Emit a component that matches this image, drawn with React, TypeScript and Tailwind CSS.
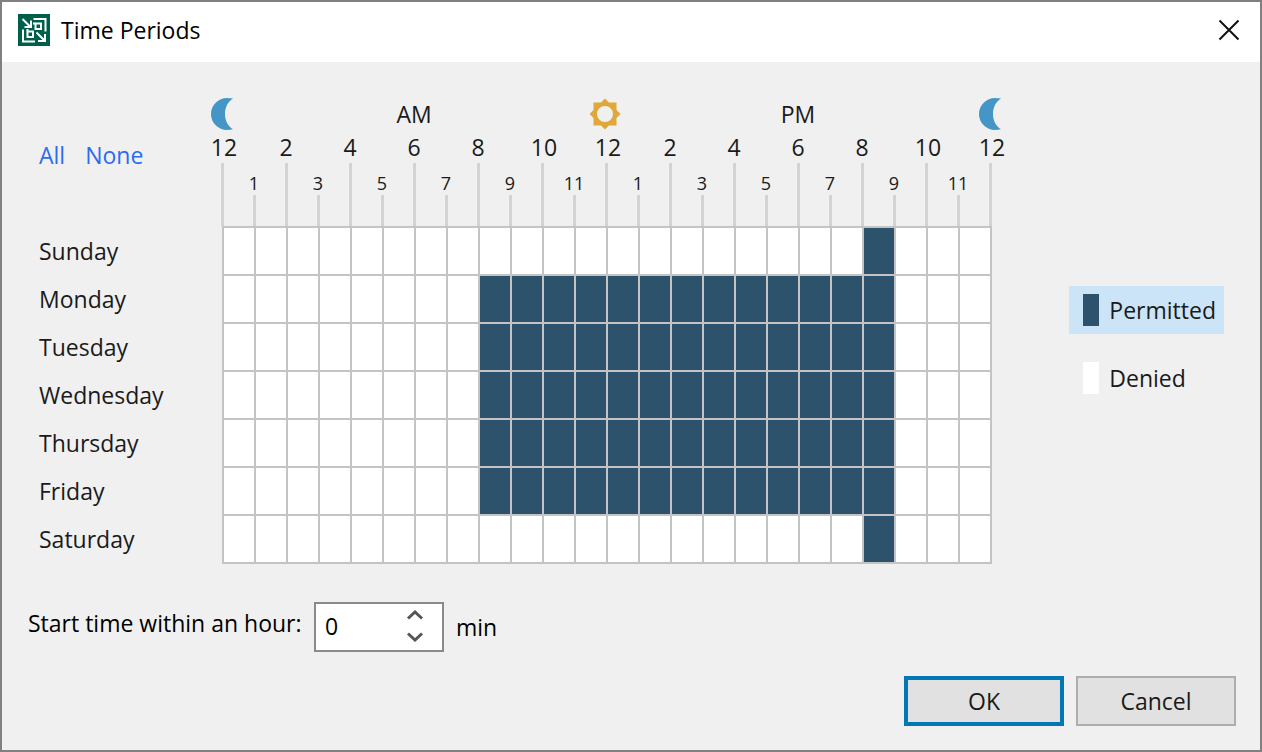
import { useState } from "react";
import type { MouseEvent } from "react";

const DAYS = ["Sunday", "Monday", "Tuesday", "Wednesday", "Thursday", "Friday", "Saturday"];
const HOURS = Array.from({ length: 24 }, (_, i) => i);
const TICKS = Array.from({ length: 25 }, (_, i) => i);

// 8 AM - 9 PM on weekdays, 8 PM - 9 PM at the weekend
const initialSchedule = DAYS.map((_, day) =>
  HOURS.map((hour) => (day > 0 && day < 6 ? hour >= 8 && hour < 21 : hour === 20)),
);

function AppLogo() {
  return (
    <svg viewBox="0 0 32 32" className="size-8" aria-hidden="true">
      <rect width="32" height="32" fill="#005f4b" />
      <g fill="none" stroke="#fff" strokeWidth="2">
        <path d="M4.500 5l8 8M13 6.500v6.500H6.500" />
        <path d="M15.500 5H27.500v12.500M17.500 9.500h5.500v5.500h-5.500z" />
        <path d="M5 15.500V27.500h12M9.500 17.500h5.500v5.500h-5.500z" />
        <path d="M15 9.500h2.500M9.500 15v2.500" />
        <path d="M18.500 18.500l8 8M27 20v7h-7" />
      </g>
    </svg>
  );
}

function Moon() {
  return (
    <svg viewBox="0 0 24 32" className="h-8 w-6 shrink-0" aria-hidden="true">
      <path d="M23 0.500Q20 0 17 0A16 16 0 0 0 17 32Q20 32 23 31.300C17.500 28 15 22 15 16S17.500 4 23 0.500z" fill="#4596c8" />
    </svg>
  );
}

function Sun() {
  return (
    <svg viewBox="0 0 32 32" className="size-8 shrink-0" aria-hidden="true">
      <path
        fillRule="evenodd"
        fill="#e0a838"
        d="M15 0.500l4 4h7.500V12l4 4-4 4v7.500H19l-4 4-4-4H3.500V20l-4-4 4-4V4.500H11zM15 8a8 8 0 1 0 0 16a8 8 0 1 0 0-16z"
      />
    </svg>
  );
}

function Marker({ tick }: { tick: number }) {
  if (tick === 12) return <Sun />;
  if (tick % 12 === 0) return <Moon />;
  if (tick === 6) return <span>AM</span>;
  if (tick === 18) return <span>PM</span>;
  return null;
}

function HourScale() {
  return (
    <div className="flex">
      {TICKS.map((tick) => (
        <div key={tick} className="flex w-8 flex-col items-center">
          <div className="flex h-[34px] items-center justify-center">
            <Marker tick={tick} />
          </div>
          {tick % 2 === 0 ? (
            <>
              <span className={`flex h-8 items-center ${tick % 12 === 0 || tick % 12 === 10 ? "pl-1" : ""}`}>
                {tick % 12 || 12}
              </span>
              <div className="h-[63px] w-[3px] bg-[#d3d3d3]" />
            </>
          ) : (
            <>
              <span className="mt-10 flex h-6 items-center text-lg">{tick % 12}</span>
              <div className="h-[31px] w-[3px] bg-[#d3d3d3]" />
            </>
          )}
        </div>
      ))}
    </div>
  );
}

function LegendItem({ label, swatch, active, onClick }: { label: string; swatch: string; active: boolean; onClick: () => void }) {
  return (
    <button
      type="button"
      aria-pressed={active}
      onClick={onClick}
      className={`flex h-12 items-center gap-[10px] pl-[14px] pr-2 ${active ? "bg-[#cce4f7]" : ""}`}
    >
      <span className={`h-8 w-4 ${swatch}`} />
      {label}
    </button>
  );
}

export default function App() {
  const [schedule, setSchedule] = useState(initialSchedule);
  const [permit, setPermit] = useState(true);
  const [minutes, setMinutes] = useState(0);

  const fill = (value: boolean) => (e: MouseEvent) => {
    e.preventDefault();
    setSchedule(DAYS.map(() => HOURS.map(() => value)));
  };

  const setCell = (day: number, hour: number) =>
    setSchedule((prev) => prev.map((row, d) => (d === day ? row.map((v, h) => (h === hour ? permit : v)) : row)));

  const clamp = (value: number) => Math.min(59, Math.max(0, value || 0));

  return (
    <div className="flex min-h-screen flex-col border-2 border-[#808080] bg-[#f0f0f0] font-['Open_Sans','Noto_Sans',sans-serif] text-[23px] leading-8 text-[#1a1a1a]">
      <header className="flex h-[60px] items-center gap-[11px] bg-white pb-1 pl-4 pr-5">
        <AppLogo />
        <h1 className="flex-1 text-black">Time Periods</h1>
        <button type="button" aria-label="Close">
          <svg viewBox="0 0 22 22" className="size-[22px]" aria-hidden="true">
            <path d="M1.500 1.500l19 19M20.500 1.500l-19 19" stroke="#111" strokeWidth="2" />
          </svg>
        </button>
      </header>

      <main className="flex flex-1 flex-col pb-6 pl-[26px] pr-6 pt-[35px]">
        <div className="flex items-start justify-between pl-[11px] pr-3">
          <div>
            <div className="flex">
              <nav className="flex w-[167px] gap-5 pt-[42px] text-[#2b6cf0]">
                <a href="#all" onClick={fill(true)}>All</a>
                <a href="#none" onClick={fill(false)}>None</a>
              </nav>
              <HourScale />
            </div>
            <table className="border-collapse">
              <tbody>
                {DAYS.map((day, d) => (
                  <tr key={day}>
                    <th scope="row" className="w-[184px] p-0 text-left font-normal">{day}</th>
                    {HOURS.map((hour) => (
                      <td key={hour} className="border-2 border-[#c4c4c4] p-0">
                        <button
                          type="button"
                          aria-label={`${day} ${hour}:00`}
                          onClick={() => setCell(d, hour)}
                          className={`block h-[46px] w-[30px] ${schedule[d][hour] ? "bg-[#2d526b]" : "bg-white"}`}
                        />
                      </td>
                    ))}
                  </tr>
                ))}
              </tbody>
            </table>
          </div>

          <div className="flex flex-col items-stretch gap-5 pt-[189px]">
            <LegendItem label="Permitted" swatch="bg-[#2d526b]" active={permit} onClick={() => setPermit(true)} />
            <LegendItem label="Denied" swatch="bg-white" active={!permit} onClick={() => setPermit(false)} />
          </div>
        </div>

        <div className="mt-[38px] flex items-center text-black">
          <label htmlFor="start-minute" className="w-[286px] pb-2">Start time within an hour:</label>
          <div className="flex h-[50px] w-[130px] items-center border-2 border-[#8a8a8a] bg-white pb-[2px] pl-[9px] pr-[18px]">
            <input
              id="start-minute"
              type="text"
              inputMode="numeric"
              value={minutes}
              onChange={(e) => setMinutes(clamp(parseInt(e.target.value, 10)))}
              className="min-w-0 flex-1 bg-transparent outline-none"
            />
            <div className="flex flex-col gap-3">
              <button type="button" aria-label="Increase" onClick={() => setMinutes(clamp(minutes + 1))}>
                <svg viewBox="0 0 18 10" className="h-[10px] w-[18px]" aria-hidden="true">
                  <path d="M2 8.500l7-6.500 7 6.500" fill="none" stroke="#555" strokeWidth="3" />
                </svg>
              </button>
              <button type="button" aria-label="Decrease" onClick={() => setMinutes(clamp(minutes - 1))}>
                <svg viewBox="0 0 18 10" className="h-[10px] w-[18px]" aria-hidden="true">
                  <path d="M2 1.500l7 6.500 7-6.500" fill="none" stroke="#555" strokeWidth="3" />
                </svg>
              </button>
            </div>
          </div>
          <span className="pl-3">min</span>
        </div>

        <footer className="mt-6 flex justify-end gap-3">
          <button type="button" className="h-[50px] w-40 border-4 border-[#0078b4] bg-[#e1e1e1]">OK</button>
          <button type="button" className="h-[50px] w-40 border-2 border-[#adadad] bg-[#e1e1e1]">Cancel</button>
        </footer>
      </main>
    </div>
  );
}
